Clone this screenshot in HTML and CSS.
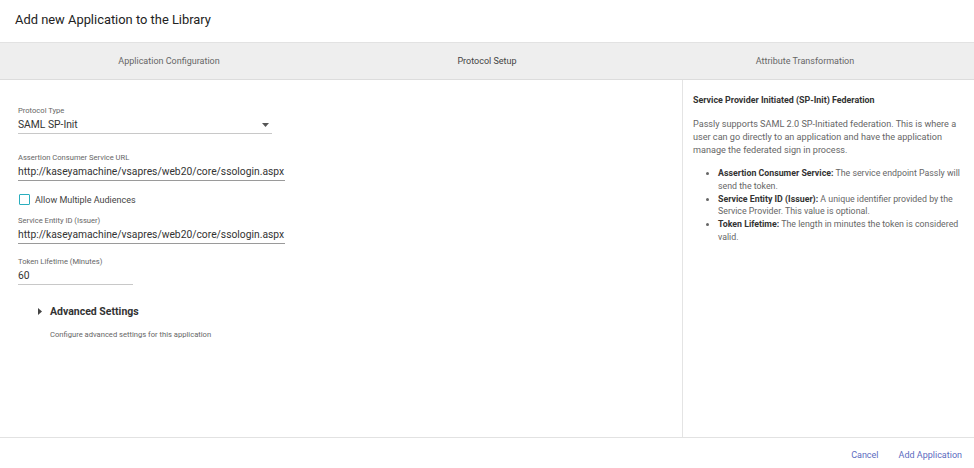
FILE: index.html
```html
<!DOCTYPE html>
<html>
<head>
<meta charset="utf-8">
<link rel="stylesheet" href="styles.css">
</head>
<body>
<div class="dialog">
  <header class="title">Add new Application to the Library</header>
  <nav class="tabs">
    <div class="tab">Application Configuration</div>
    <div class="tab">Protocol Setup</div>
    <div class="tab">Attribute Transformation</div>
  </nav>
  <main class="content">
    <section class="form">
      <div class="field select-field">
        <label class="label">Protocol Type</label>
        <div class="value select">
          <span>SAML SP-Init</span>
          <svg class="caret" width="7" height="4" viewBox="0 0 7 4"><path d="M0 0h7L3.5 4z" fill="#555"/></svg>
        </div>
      </div>
      <div class="field url-field">
        <label class="label">Assertion Consumer Service URL</label>
        <div class="value">http://kaseyamachine/vsapres/web20/core/ssologin.aspx</div>
      </div>
      <div class="checkbox-row">
        <span class="checkbox"></span>
        <span class="checkbox-label">Allow Multiple Audiences</span>
      </div>
      <div class="field entity-field">
        <label class="label">Service Entity ID (Issuer)</label>
        <div class="value">http://kaseyamachine/vsapres/web20/core/ssologin.aspx</div>
      </div>
      <div class="field token-field">
        <label class="label">Token Lifetime (Minutes)</label>
        <div class="value">60</div>
      </div>
      <div class="advanced">
        <div class="adv-head">
          <svg class="tri" width="4" height="7" viewBox="0 0 4 7"><path d="M0 0L4 3.5L0 7z" fill="#444"/></svg>
          <span>Advanced Settings</span>
        </div>
        <div class="adv-desc">Configure advanced settings for this application</div>
      </div>
    </section>
    <aside class="help">
      <h3 class="help-title">Service Provider Initiated (SP-Init) Federation</h3>
      <p class="help-text">Passly supports SAML 2.0 SP-Initiated federation. This is where a user can go directly to an application and have the application manage the federated sign in process.</p>
      <ul class="help-list">
        <li><b>Assertion Consumer Service:</b> The service endpoint Passly will send the token.</li>
        <li><b>Service Entity ID (Issuer):</b> A unique identifier provided by the Service Provider. This value is optional.</li>
        <li><b>Token Lifetime:</b> The length in minutes the token is considered valid.</li>
      </ul>
    </aside>
  </main>
  <footer class="actions">
    <button class="btn">Cancel</button>
    <button class="btn">Add Application</button>
  </footer>
</div>
</body>
</html>
```
FILE: styles.css
```css
* { box-sizing: border-box; }
html, body { margin: 0; padding: 0; background: #fff; }
body { font-family: Roboto, "Noto Sans", Arial, sans-serif; color: #333; }

.dialog { width: 974px; height: 468px; display: flex; flex-direction: column; }

.title { height: 42px; padding: 12px 0 0 15px; font-size: 12.9px; color: #222; }

.tabs {
  height: 38px; display: grid; grid-template-columns: 1fr 1fr 1fr; padding: 0 10px;
  background: #eeeeee; border-top: 1px solid #e2e2e2; border-bottom: 1px solid #dcdcdc;
}
.tab { display: flex; align-items: center; justify-content: center; font-size: 9px; color: #666; }
.tab:nth-child(2) { color: #444; }

.content { flex: 1; display: flex; min-height: 0; }
.form { width: 682px; padding: 26px 0 0 18px; }
.help { flex: 1; border-left: 1px solid #e4e4e4; padding: 15px 10px 0 10px; }

.field { display: flex; flex-direction: column; }
.label { font-size: 7.6px; color: #666; line-height: 10px; margin-bottom: 2px; }
.value {
  font-size: 10.3px; color: #333; line-height: 14px; padding-bottom: 1px;
  border-bottom: 1px solid #9a9a9a;
}
.select { display: flex; justify-content: space-between; align-items: center; width: 254px; border-bottom-color: #c8c8c8; }
.caret { margin-right: 3px; }
.url-field { margin-top: 19px; }
.url-field .value, .entity-field .value { width: 267px; }
.entity-field { margin-top: 11px; }
.token-field { margin-top: 13px; }
.token-field .value { width: 115px; border-bottom-color: #c8c8c8; }

.checkbox-row { display: flex; align-items: center; margin-top: 13px; height: 11px; }
.checkbox {
  display: block; flex: none; width: 11px; height: 11px; margin-left: 1px;
  border: 1.5px solid #2aaebe; border-radius: 1px; background: #fff;
}
.checkbox-label { font-size: 9px; color: #444; margin-left: 5px; }

.advanced { margin-top: 20px; padding-left: 20px; }
.adv-head { display: flex; align-items: center; height: 13px; font-size: 10.5px; font-weight: 700; color: #333; }
.tri { margin-right: 8px; }
.adv-desc { margin-top: 12px; padding-left: 12px; font-size: 7.6px; line-height: 10px; color: #666; }

.help-title { margin: 0; font-size: 8.9px; font-weight: 700; color: #333; line-height: 11px; }
.help-text { margin: 12px 0 0; font-size: 9.1px; line-height: 13px; color: #666; }
.help-list { margin: 10px 0 0; padding-left: 25px; font-size: 8.8px; line-height: 12.8px; color: #666; }
.help-list b { color: #333; }

.actions {
  height: 31px; border-top: 1px solid #e2e2e2; display: flex; justify-content: flex-end;
  align-items: center; gap: 20px; padding: 4px 12px 0 0;
}
.btn { background: none; border: 0; padding: 0; font-family: inherit; font-size: 9px; color: #5c6bc0; cursor: pointer; }
```
